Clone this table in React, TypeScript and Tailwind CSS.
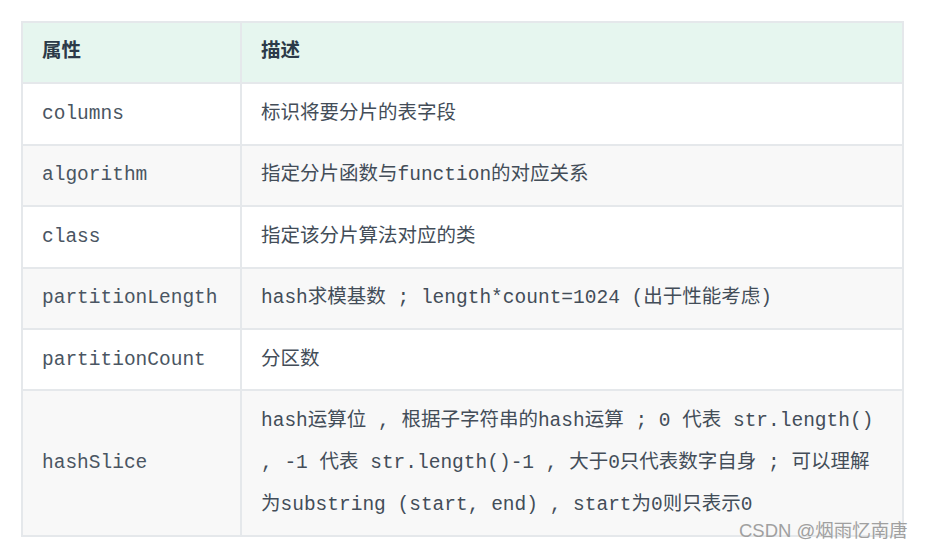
type Row = { name: string; desc: React.ReactNode[] };

const rows: Row[] = [
  { name: "columns", desc: ["标识将要分片的表字段"] },
  { name: "algorithm", desc: ["指定分片函数与function的对应关系"] },
  { name: "class", desc: ["指定该分片算法对应的类"] },
  {
    name: "partitionLength",
    desc: ["hash求模基数 ; length*count=1024 (出于性能考虑)"],
  },
  { name: "partitionCount", desc: ["分区数"] },
  {
    name: "hashSlice",
    desc: [
      "hash运算位 , 根据子字符串的hash运算 ; 0 代表 str.length()",
      ", -1 代表 str.length()-1 , 大于0只代表数字自身 ; 可以理解",
      "为substring (start, end) , start为0则只表示0",
    ],
  },
];

const mono = "font-['Liberation_Mono','Noto_Sans_CJK_SC',monospace]";

export default function App() {
  return (
    <div className="relative w-[926px] h-[551px] bg-white overflow-hidden">
      <div className="pt-[21px] pl-[21px]">
        <table className="w-[883px] table-fixed border-collapse text-[19.5px] leading-[42px]">
          <colgroup>
            <col className="w-[219px]" />
            <col />
          </colgroup>
          <thead>
            <tr className="bg-[#e6f6ef]">
              {["属性", "描述"].map((h) => (
                <th
                  key={h}
                  className="border-2 border-[#e5e8eb] px-[19px] pt-[5px] pb-[12.4px] text-left font-bold text-[#2c3a48] font-['Noto_Sans_CJK_SC',sans-serif]"
                >
                  {h}
                </th>
              ))}
            </tr>
          </thead>
          <tbody>
            {rows.map((r, i) => (
              <tr key={r.name} className={i % 2 === 1 ? "bg-[#f8f8f8]" : "bg-white"}>
                <td
                  className={`border-2 border-[#e5e8eb] px-[19px] py-[8.7px] text-[#4a5562] ${mono}`}
                >
                  {r.name}
                </td>
                <td
                  className={`border-2 border-[#e5e8eb] px-[19px] py-[8.7px] text-[#434d58] whitespace-nowrap ${mono}`}
                >
                  {r.desc.map((line, j) => (
                    <div key={j}>{line}</div>
                  ))}
                </td>
              </tr>
            ))}
          </tbody>
        </table>
      </div>

      {/* watermark over the table edge */}
      <div className="absolute left-[739px] top-[518px] text-[18.5px] leading-[26px] text-[#a0a0a0] font-['Liberation_Sans','Noto_Sans_CJK_SC',sans-serif]">
        CSDN @烟雨忆南唐
      </div>
    </div>
  );
}
